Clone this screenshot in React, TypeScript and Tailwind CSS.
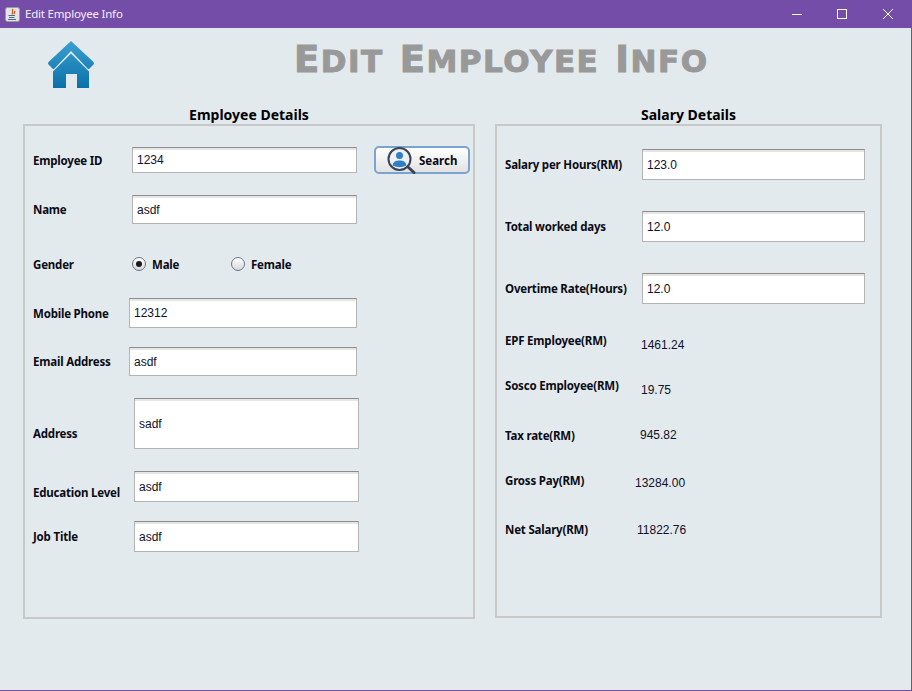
import React from 'react';

const HomeIcon = () => (
  <svg width="48" height="48" viewBox="0 0 48 48" className="block">
    <defs>
      <linearGradient id="homeFill" gradientUnits="userSpaceOnUse" x1="0" y1="0" x2="0" y2="47">
        <stop offset="0" stopColor="#3aa0d0" />
        <stop offset="1" stopColor="#0a70a8" />
      </linearGradient>
    </defs>
    <path
      d="M24 0 L46.500 21 Q47.500 22.500 46.500 23.500 L42.500 27.500 Q41.500 28.500 40.500 27.500 L24 10 L7.500 27.500 Q6.500 28.500 5.500 27.500 L1.500 23.500 Q0.500 22.500 1.500 21 Z"
      fill="url(#homeFill)"
    />
    <path d="M24 12.500 L42 30.500 V47 H30 V33 H19 V47 H6 V30.500 Z" fill="url(#homeFill)" />
  </svg>
);

const JavaIcon = () => (
  <svg width="15" height="15" viewBox="0 0 15 15">
    <rect x="0.500" y="0.500" width="14" height="14" rx="2" fill="#e4e4e4" stroke="#9a9a9a" />
    <path d="M8 2 C6 4 9 5 7 7.500 M10 4 C9 5 10 6 9 7" stroke="#d8571c" strokeWidth="1.200" fill="none" />
    <path d="M3.500 8.500 H10 M4 10.500 H9.500 M3 12.500 H11" stroke="#4a6a8a" strokeWidth="1" fill="none" />
  </svg>
);

const SearchIcon = () => (
  <svg width="29" height="27" viewBox="0 0 29 27">
    <circle cx="12.500" cy="12" r="11" fill="#eef1f4" stroke="#3a4256" strokeWidth="2" />
    <circle cx="12.500" cy="8.500" r="3.500" fill="#2f7fc4" />
    <path d="M5.500 18.500 C6 14.500 9 13.500 12.500 13.500 C16 13.500 19 14.500 19.500 18.500 Q12.500 22 5.500 18.500 Z" fill="#2f7fc4" />
    <path d="M21 20 L27 25.500" stroke="#3a4256" strokeWidth="3" strokeLinecap="round" />
  </svg>
);

const TextBox = ({ value, className }: { value: string; className: string }) => (
  <input
    readOnly
    value={value}
    className={`block bg-white border border-[#b4b4b4] border-t-[#8c8c8c] shadow-[inset_0_2px_0_#e6e6e6] pl-1 text-[12px] text-[#10102a] outline-none font-['Liberation_Sans',sans-serif] ${className}`}
  />
);

const Radio = ({ checked }: { checked?: boolean }) => (
  <span className="flex items-center justify-center w-[14px] h-[14px] rounded-full border border-[#6d7480] bg-gradient-to-b from-[#ffffff] to-[#d4d8de]">
    {checked && <span className="w-[6px] h-[6px] rounded-full bg-[#1a1a1a]" />}
  </span>
);

// Title letters: big initial, smaller uppercase rest
const TitleWord = ({ first, rest }: { first: string; rest: string }) => (
  <span>
    <span className="text-[37px]">{first}</span>
    <span className="text-[31px] uppercase">{rest}</span>
  </span>
);

const labelClass = 'text-[11.500px] tracking-[-0.2px] font-bold text-[#0b0b14] whitespace-nowrap';
const valueClass = "text-[12px] text-[#10102a] font-['Liberation_Sans',sans-serif] whitespace-nowrap";

const App: React.FC = () => {
  return (
    <div className="w-[912px] h-[691px] flex flex-col bg-[#e3eaee] border-r border-b border-[#744da9] overflow-hidden font-['Noto_Sans',sans-serif]">
      {/* Title bar */}
      <div className="h-[28px] shrink-0 bg-[#744da9] flex items-center pl-[5px] text-white">
        <JavaIcon />
        <span className="ml-[5px] text-[11.500px] tracking-[-0.2px] text-[#f4eefa]">Edit Employee Info</span>
        <div className="ml-auto flex items-center pr-[18px]">
          <span className="w-[10px] h-px bg-white" />
          <span className="w-[10px] h-[10px] border border-white ml-[35px]" />
          <svg width="10" height="10" viewBox="0 0 10 10" className="ml-[36px]">
            <path d="M0 0 L10 10 M10 0 L0 10" stroke="#fff" strokeWidth="1" />
          </svg>
        </div>
      </div>

      {/* Header */}
      <div className="h-[78px] shrink-0 flex items-start">
        <div className="ml-[47px] mt-[13px]">
          <HomeIcon />
        </div>
        <h1 className="ml-[199px] mt-[8px] leading-[48px] font-black text-[#999999] whitespace-nowrap font-['DejaVu_Sans',sans-serif] flex gap-[16px] tracking-[1.5px] [-webkit-text-stroke:1px_#999999]">
          <TitleWord first="E" rest="dit" />
          <TitleWord first="E" rest="mployee" />
          <TitleWord first="I" rest="nfo" />
        </h1>
      </div>

      {/* Panels */}
      <div className="flex items-start pl-[23px] gap-[20px]">
        <div className="w-[452px]">
          <h2 className="h-[18px] leading-[18px] text-center text-[14px] font-bold text-black">Employee Details</h2>
          <div className="h-[495px] border-2 border-[#c8c8c8] pl-[8px] pt-[21px]">
            <div className="flex items-center h-[26px]">
              <span className={`${labelClass} w-[99px] mt-[2px]`}>Employee ID</span>
              <TextBox value="1234" className="w-[225px] h-[26px]" />
              <div className="ml-[17px] w-[96px] h-[28px] rounded-[5px] border-2 border-[#7ba3cf] bg-gradient-to-b from-[#ffffff] to-[#e2e2e2] flex items-center pl-[11px]">
                <SearchIcon />
                <span className="ml-[3px] mt-[2px] text-[11.500px] font-bold text-[#0b0b14]">Search</span>
              </div>
            </div>
            <div className="flex items-center h-[29px] mt-[22px]">
              <span className={`${labelClass} w-[99px]`}>Name</span>
              <TextBox value="asdf" className="w-[225px] h-[29px]" />
            </div>
            <div className="flex items-center h-[20px] mt-[30px]">
              <span className={`${labelClass} w-[99px] mt-[2px]`}>Gender</span>
              <Radio checked />
              <span className={`${labelClass} ml-[6px] w-[79px] mt-[2px]`}>Male</span>
              <Radio />
              <span className={`${labelClass} ml-[6px] mt-[2px]`}>Female</span>
            </div>
            <div className="flex items-center h-[30px] mt-[24px]">
              <span className={`${labelClass} w-[96px] mt-[2px]`}>Mobile Phone</span>
              <TextBox value="12312" className="w-[228px] h-[30px]" />
            </div>
            <div className="flex items-center h-[29px] mt-[19px]">
              <span className={`${labelClass} w-[96px]`}>Email Address</span>
              <TextBox value="asdf" className="w-[228px] h-[29px]" />
            </div>
            <div className="flex items-center h-[51px] mt-[22px]">
              <span className={`${labelClass} w-[101px] mt-[21px]`}>Address</span>
              <TextBox value="sadf" className="w-[225px] h-[51px]" />
            </div>
            <div className="flex items-center h-[31px] mt-[22px]">
              <span className={`${labelClass} w-[101px] mt-[13px]`}>Education Level</span>
              <TextBox value="asdf" className="w-[225px] h-[31px]" />
            </div>
            <div className="flex items-center h-[31px] mt-[19px]">
              <span className={`${labelClass} w-[101px]`}>Job Title</span>
              <TextBox value="asdf" className="w-[225px] h-[31px]" />
            </div>
          </div>
        </div>

        <div className="w-[387px]">
          <h2 className="h-[18px] leading-[18px] text-center text-[14px] font-bold text-black">Salary Details</h2>
          <div className="h-[494px] border-2 border-[#c8c8c8] pl-[8px] pt-[23px]">
            <div className="flex items-center h-[31px]">
              <span className={`${labelClass} w-[137px]`}>Salary per Hours(RM)</span>
              <TextBox value="123.0" className="w-[223px] h-[31px]" />
            </div>
            <div className="flex items-center h-[31px] mt-[31px]">
              <span className={`${labelClass} w-[137px]`}>Total worked days</span>
              <TextBox value="12.0" className="w-[223px] h-[31px]" />
            </div>
            <div className="flex items-center h-[31px] mt-[31px]">
              <span className={`${labelClass} w-[137px]`}>Overtime Rate(Hours)</span>
              <TextBox value="12.0" className="w-[223px] h-[31px]" />
            </div>
            <div className="flex items-start h-[20px] mt-[28px]">
              <span className={`${labelClass} w-[136px]`}>EPF Employee(RM)</span>
              <span className={`${valueClass} mt-[4px]`}>1461.24</span>
            </div>
            <div className="flex items-start h-[20px] mt-[25px]">
              <span className={`${labelClass} w-[136px]`}>Sosco Employee(RM)</span>
              <span className={`${valueClass} mt-[4px]`}>19.75</span>
            </div>
            <div className="flex items-start h-[20px] mt-[29px]">
              <span className={`${labelClass} w-[135px] mt-[1px]`}>Tax rate(RM)</span>
              <span className={valueClass}>945.82</span>
            </div>
            <div className="flex items-start h-[20px] mt-[25px]">
              <span className={`${labelClass} w-[130px] mt-[1px]`}>Gross Pay(RM)</span>
              <span className={`${valueClass} mt-[3px]`}>13284.00</span>
            </div>
            <div className="flex items-start h-[20px] mt-[30px]">
              <span className={`${labelClass} w-[132px]`}>Net Salary(RM)</span>
              <span className={valueClass}>11822.76</span>
            </div>
          </div>
        </div>
      </div>
    </div>
  );
};

export default App;
